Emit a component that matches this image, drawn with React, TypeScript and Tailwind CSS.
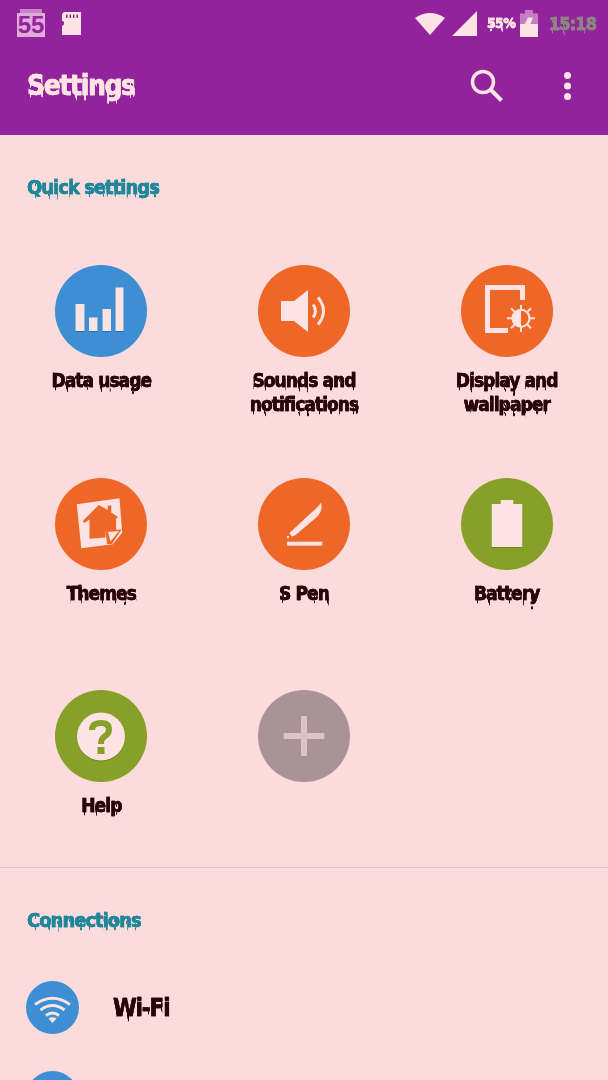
import React from "react";

const dripFont =
  "font-['DejaVu_Sans_Condensed','DejaVu_Sans',sans-serif] font-bold tracking-[-0.05em] [-webkit-text-stroke:0.4px_currentColor] [filter:url(#drip)]";
const paper = "#fde3e3";

const DataIcon = () => (
  <svg viewBox="0 0 92 92" className="w-full h-full">
    <path d="M20.5 40H29.5V67H20.5ZM34 53.5H42.5V67H34ZM47.5 45H56V67H47.5ZM60.5 23.5H68.5V67H60.5Z" fill="#2a6aa8" />
    <path d="M20.5 39H29.5V66H20.5ZM34 52.5H42.5V66H34ZM47.5 44H56V66H47.5ZM60.5 22.5H68.5V66H60.5Z" fill={paper} />
  </svg>
);

const SoundIcon = () => (
  <svg viewBox="0 0 92 92" className="w-full h-full">
    <path d="M23 36H36L50 25V67L36 56H23Z" fill={paper} />
    <path d="M55 39.5Q60 46 55 52.5" fill="none" stroke={paper} strokeWidth="3" />
    <path d="M60 32.5Q71 46 60 59.5" fill="none" stroke={paper} strokeWidth="3" />
  </svg>
);

const DisplayIcon = () => (
  <svg viewBox="0 0 92 92" className="w-full h-full">
    <path d="M47 65.5H26.5V22.5H61.5V35" fill="none" stroke={paper} strokeWidth="5" />
    <circle cx="60" cy="53.3" r="8.5" fill="#ee6726" stroke={paper} strokeWidth="2" />
    <path d="M60 44.8A8.5 8.5 0 0 0 60 61.8Z" fill={paper} />
    <path
      d="M60 40V45M60 62V67M46 53.3H51M69 53.3H74M50 43.3L53.5 46.8M66.5 59.8L70 63.3M50 63.3L53.5 59.8M66.5 46.8L70 43.3"
      stroke={paper}
      strokeWidth="2"
    />
  </svg>
);

const ThemesIcon = () => (
  <svg viewBox="0 0 92 92" className="w-full h-full">
    <path d="M21.8 26.3L64.5 20.3L67.2 54.7L57.8 66.3L26.2 70.3Z" fill={paper} />
    <path
      d="M43.8 27L52.8 32V27.5H56.2V34.5L63 39L61 41L61.2 52.3L50.5 53V59.5L34.5 60.7V41.5L29.5 45L27.8 43Z"
      fill="#ee6726"
    />
    <path d="M50.5 52.5L66.5 51.5L57 66L52 66Z" fill="#ee6726" />
    <path d="M53 54L64 53L55.5 63.5Z" fill={paper} />
  </svg>
);

const PenIcon = () => (
  <svg viewBox="0 0 92 92" className="w-full h-full">
    <path d="M33.5 58.5L31.5 55L53 35Q60 29 63 24.7Q65 32 60 38L40 55Q36 58.5 33.5 58.5Z" fill={paper} />
    <circle cx="30" cy="59" r="1.2" fill={paper} />
    <rect x="29" y="63.7" width="35.3" height="4" fill={paper} />
  </svg>
);

const BatteryIcon = () => (
  <svg viewBox="0 0 92 92" className="w-full h-full">
    <path d="M30.7 27H39.7V22.5H52.3V27H61.3V70H30.7Z" fill="#6f8420" />
    <path d="M30.7 26H39.7V22H52.3V26H61.3V69H30.7Z" fill={paper} />
  </svg>
);

const HelpIcon = () => (
  <svg viewBox="0 0 92 92" className="w-full h-full">
    <circle cx="46" cy="47.5" r="24" fill="#6f8420" />
    <circle cx="46" cy="46.5" r="24" fill={paper} />
    <path
      d="M37 40Q37 33 46 33Q54 33 54 39.5Q54 43.5 50 46Q46 48.5 46 54"
      fill="none"
      stroke="#86a028"
      strokeWidth="6"
    />
    <rect x="42.5" y="57" width="7" height="7" fill="#86a028" />
  </svg>
);

const PlusIcon = () => (
  <svg viewBox="0 0 92 92" className="w-full h-full" fill="#e2c1c6">
    <rect x="25.7" y="43" width="40.6" height="6" />
    <rect x="43" y="26" width="6" height="40" />
  </svg>
);

const WifiIcon = () => (
  <svg viewBox="0 0 53 53" className="w-full h-full" fill="none" stroke={paper} strokeWidth="3">
    <path d="M9 23.5Q26.5 11 44 23.5" />
    <path d="M14.5 29Q26.5 20 38.5 29" />
    <path d="M20 34.5Q26.5 29.5 33 34.5" />
    <path d="M22.5 37.5L26.5 42L30.5 37.5Q26.5 35 22.5 37.5Z" fill={paper} stroke="none" />
  </svg>
);

const quickSettings = [
  { label: ["Data usage"], bg: "bg-[#3d8ed2]", icon: <DataIcon /> },
  { label: ["Sounds and", "notifications"], bg: "bg-[#ee6726]", icon: <SoundIcon /> },
  { label: ["Display and", "wallpaper"], bg: "bg-[#ee6726]", icon: <DisplayIcon /> },
  { label: ["Themes"], bg: "bg-[#ee6726]", icon: <ThemesIcon /> },
  { label: ["S Pen"], bg: "bg-[#ee6726]", icon: <PenIcon /> },
  { label: ["Battery"], bg: "bg-[#86a028]", icon: <BatteryIcon /> },
  { label: ["Help"], bg: "bg-[#86a028]", icon: <HelpIcon /> },
  { label: [], bg: "bg-[#a89399]", icon: <PlusIcon /> },
];

const QuickTile = ({ label, bg, icon }: { label: string[]; bg: string; icon: React.ReactNode }) => (
  <div className="flex flex-col items-center h-[212.5px]">
    <div className={`w-[92px] h-[92px] rounded-full ${bg}`}>{icon}</div>
    <div className={`mt-[11px] text-center text-[19px] leading-6 text-[#2a0408] ${dripFont}`}>
      {label.map((line) => (
        <div key={line}>{line}</div>
      ))}
    </div>
  </div>
);

const CalendarBadge = () => (
  <div className="flex flex-col items-center w-7">
    <div className="w-[22px] h-[4px] bg-[#c884c8]" />
    <div className="flex items-center justify-center w-7 h-6 bg-[#e0a9d8] text-[#93239d] font-['Liberation_Sans',sans-serif] font-bold text-[24px] leading-none">
      55
    </div>
  </div>
);

const StatusBar = () => (
  <div className="flex items-center h-[44px] pl-[17px] pr-[19px] pt-[2px]">
    <CalendarBadge />
    <svg viewBox="0 0 19 23" className="w-[19px] h-[23px] ml-[17px]" fill={paper}>
      <path d="M2 0H19V23H0V14L2 12.5V10L0 8.5V2Z" />
      <path d="M4 2.5H5.5V6H4ZM7.5 2.5H9V6H7.5ZM11 2.5H12.5V6H11ZM14.5 2.5H16V6H14.5Z" fill="#93239d" />
    </svg>
    <svg viewBox="0 0 30 23" className="w-[30px] h-[23px] ml-auto" fill={paper}>
      <path d="M0 6Q15 -4 30 6L15 23Z" />
    </svg>
    <svg viewBox="0 0 25 25" className="w-[25px] h-[25px] ml-[7px]" fill={paper}>
      <path d="M25 0V25H0Z" />
    </svg>
    <span className={`w-[27px] ml-[10px] whitespace-nowrap text-[14px] text-[#fde3e3] ${dripFont}`}>55%</span>
    <svg viewBox="0 0 18 27" className="w-[18px] h-[27px] ml-[6px]">
      <path d="M5 0H13V3.5H18V27H0V3.5H5Z" fill="#c47ec6" />
      <path d="M0 14H5L8 7.5H13L10.5 14H18V27H0Z" fill={paper} />
    </svg>
    <span className={`w-[40px] ml-[11px] whitespace-nowrap text-[18px] text-[#8e8680] ${dripFont}`}>15:18</span>
  </div>
);

const Toolbar = () => (
  <div className="flex items-center h-[91px] pl-[27px] pb-[8px]">
    <span className={`text-[28px] text-[#fde3e3] ${dripFont}`}>Settings</span>
    <svg viewBox="0 0 33 33" className="w-[33px] h-[33px] ml-auto" fill="none" stroke={paper}>
      <circle cx="13" cy="13" r="10.5" strokeWidth="3.5" />
      <path d="M20.5 20.5L31.5 31.5" strokeWidth="4" />
    </svg>
    <svg viewBox="0 0 7 28" className="w-[7px] h-[28px] ml-[61px] mr-[37px]" fill={paper}>
      <circle cx="3.5" cy="3.5" r="3.5" />
      <circle cx="3.5" cy="14" r="3.5" />
      <circle cx="3.5" cy="24.5" r="3.5" />
    </svg>
  </div>
);

const SectionTitle = ({ children }: { children: React.ReactNode }) => (
  <h2 className={`px-[27px] text-[20px] leading-7 text-[#20879a] ${dripFont}`}>{children}</h2>
);

const App = () => (
  <div className="w-[608px] h-[1080px] overflow-hidden bg-[#fbdbdc]">
    {/* Narrow vertical streaks, shifted down only, leave paint runs under each glyph */}
    <svg className="block w-0 h-0">
      <filter id="drip" x="-5%" y="-10%" width="110%" height="150%" colorInterpolationFilters="sRGB">
        <feTurbulence type="fractalNoise" baseFrequency="0.35 0.001" numOctaves="1" seed="7" result="noise" />
        <feComponentTransfer in="noise" result="streaks">
          <feFuncR type="discrete" tableValues="0 0 0.05 0.1 0.25 0.5 0.5 0.5 0.5 0.5 0.5 0.5" />
          <feFuncG type="linear" slope="0" intercept="0.5" />
          <feFuncA type="linear" slope="0" intercept="1" />
        </feComponentTransfer>
        <feDisplacementMap in="SourceGraphic" in2="streaks" scale="12" xChannelSelector="G" yChannelSelector="R" result="runs" />
        <feMerge>
          <feMergeNode in="runs" />
          <feMergeNode in="SourceGraphic" />
        </feMerge>
      </filter>
    </svg>
    <header className="bg-[#93239d]">
      <StatusBar />
      <Toolbar />
    </header>
    <section className="pt-[38px]">
      <SectionTitle>Quick settings</SectionTitle>
      <div className="grid grid-cols-3 pt-[64px] h-[690px]">
        {quickSettings.map((tile, i) => (
          <QuickTile key={i} {...tile} />
        ))}
      </div>
    </section>
    <div className="h-px bg-[#e5c3c5] mt-[-24px]" />
    <section className="pt-[38px]">
      <SectionTitle>Connections</SectionTitle>
      <div className="flex items-center pl-[26px] mt-[47px]">
        <div className="w-[53px] h-[53px] rounded-full bg-[#3d8ed2]">
          <WifiIcon />
        </div>
        <span className={`ml-[34px] text-[24px] text-[#2a0408] ${dripFont}`}>Wi-Fi</span>
      </div>
      <div className="w-[53px] h-[53px] rounded-full bg-[#3d8ed2] ml-[26px] mt-[37px]" />
    </section>
  </div>
);

export default App;
